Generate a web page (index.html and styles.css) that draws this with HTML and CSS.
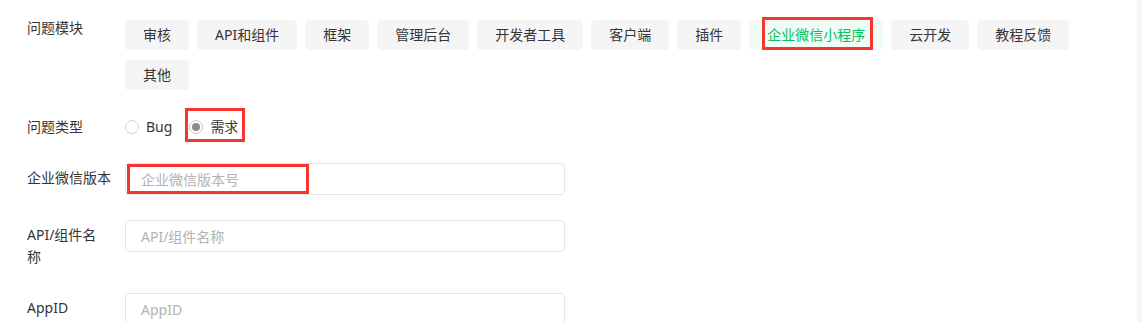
FILE: index.html
```html
<!DOCTYPE html>
<html lang="zh-CN">
<head>
    <meta charset="UTF-8">
    <meta name="viewport" content="width=device-width, initial-scale=1.0">
    <title>反馈问题</title>
    <link rel="stylesheet" href="styles.css">
</head>
<body>

    <div class="form">
        <!-- 问题模块 -->
        <div class="row row-tags">
            <div class="label">问题模块</div>
            <div class="tags">
                <span class="tag">审核</span>
                <span class="tag">API和组件</span>
                <span class="tag">框架</span>
                <span class="tag">管理后台</span>
                <span class="tag">开发者工具</span>
                <span class="tag">客户端</span>
                <span class="tag">插件</span>
                <span class="tag active"><span class="mark mark-tag">企业微信小程序</span></span>
                <span class="tag">云开发</span>
                <span class="tag">教程反馈</span>
                <span class="tag">其他</span>
            </div>
        </div>

        <!-- 问题类型 -->
        <div class="row">
            <div class="label">问题类型</div>
            <div class="radios">
                <label class="radio"><span class="dot"></span>Bug</label>
                <label class="radio checked mark mark-radio"><span class="dot"></span>需求</label>
            </div>
        </div>

        <div class="row">
            <div class="label">企业微信版本</div>
            <div class="field">
                <input type="text" class="input" placeholder="企业微信版本号">
                <span class="mark-input"></span>
            </div>
        </div>

        <div class="row">
            <div class="label">API/组件名<br>称</div>
            <div class="field">
                <input type="text" class="input" placeholder="API/组件名称">
            </div>
        </div>

        <div class="row">
            <div class="label">AppID</div>
            <div class="field">
                <input type="text" class="input" placeholder="AppID">
            </div>
        </div>
    </div>

</body>
</html>
```

FILE: styles.css
```css
html {
    overflow: hidden;
}

body {
    font-family: "Noto Sans", "Noto Sans CJK SC", sans-serif;
    font-size: 14px;
    background-color: #fff;
    color: #353535;
    margin: 0;
    min-height: 100vh;
    box-sizing: border-box;
    border-right: 5px solid #f6f6f6;
}

.form {
    padding: 13px 45px 0 27px;
}

.row {
    display: flex;
    align-items: flex-start;
    margin-bottom: 25px;
}

.row-tags {
    margin-bottom: 22px;
}

.label {
    width: 88px;
    margin-right: 10px;
    padding-top: 4px;
    line-height: 22px;
    flex-shrink: 0;
}

/* 标签 */
.tags {
    display: flex;
    flex-wrap: wrap;
    gap: 10px 8px;
    padding-top: 7px;
    flex: 1;
}

.tag {
    height: 30px;
    line-height: 30px;
    padding: 0 18px;
    background-color: #f5f5f5;
    border-radius: 4px;
    color: #353535;
    white-space: nowrap;
}

.tag.active {
    background-color: #effbf4;
    color: #07c160;
}

/* 红框标注 */
.mark {
    position: relative;
}

.mark::after {
    content: "";
    position: absolute;
    border: 3px solid #f43530;
    pointer-events: none;
}

.mark-tag {
    display: inline-block;
    line-height: 22px;
}

.mark-tag::after {
    top: -7px;
    bottom: -4px;
    left: -5px;
    right: -8px;
}

/* 单选 */
.radios {
    display: flex;
    gap: 17px;
    padding-top: 4px;
    line-height: 22px;
}

.radio {
    display: flex;
    align-items: center;
    gap: 7px;
    cursor: pointer;
}

.dot {
    width: 14px;
    height: 14px;
    box-sizing: border-box;
    border: 1px solid #d5d5d5;
    border-radius: 50%;
    display: flex;
    align-items: center;
    justify-content: center;
}

.radio.checked .dot {
    border-color: #c9c9c9;
}

.radio.checked .dot::before {
    content: "";
    width: 8px;
    height: 8px;
    border-radius: 50%;
    background-color: #8a8a8a;
}

.mark-radio::after {
    top: -8px;
    bottom: -4px;
    left: -4px;
    right: -7px;
}

/* 输入框 */
.field {
    position: relative;
}

.input {
    width: 440px;
    height: 32px;
    box-sizing: border-box;
    padding: 0 15px;
    border: 1px solid #e5e5e5;
    border-radius: 4px;
    font-family: inherit;
    font-size: 14px;
    color: #353535;
    outline: none;
}

.input::placeholder {
    color: #b2b2b2;
}

.mark-input {
    position: absolute;
    left: 2px;
    top: 1px;
    width: 182px;
    height: 30px;
    box-sizing: border-box;
    border: 3px solid #f43530;
    pointer-events: none;
}
```
